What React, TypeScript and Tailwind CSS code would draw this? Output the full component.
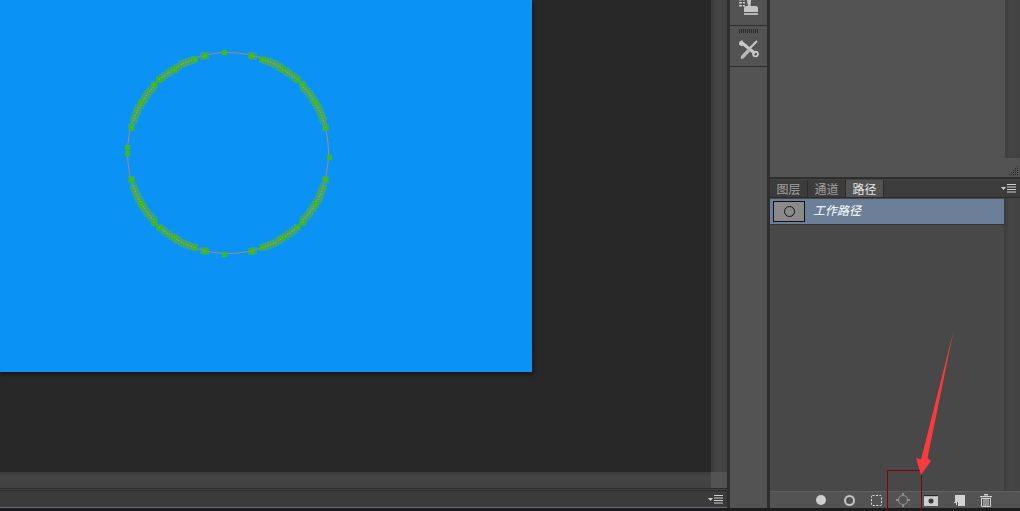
import React from 'react';

const FONT = "font-['Noto_Sans_CJK_SC','Liberation_Sans',sans-serif]";

// angles measured from the vertical axis, the stroke is mirrored in all four quadrants
const RUNS: [number, number][] = [
    [13, 15],
    [20, 42],
    [43, 44],
    [47, 72],
    [75, 76],
];

const soft: { x: number; y: number }[] = [];
const hard: { x: number; y: number }[] = [
    { x: 224, y: 52 },
    { x: 224, y: 254 },
    { x: 127, y: 153 },
    { x: 127, y: 147 },
    { x: 329, y: 157 },
];
RUNS.forEach(([from, to]) => {
    let n = 0;
    for (let a = from; a <= to; a += 1.6) {
        const rad = (a * Math.PI) / 180;
        const dx = Math.sin(rad) * 100.5;
        const dy = Math.cos(rad) * 100.5;
        [[-1, -1], [1, -1], [-1, 1], [1, 1]].forEach(([sx, sy]) => {
            const p = { x: Math.round(228 + sx * dx), y: Math.round(153 + sy * dy) };
            soft.push(p);
            if (n % 8 === 0) hard.push(p);
        });
        n += 1;
    }
});

const BrushedCircle = () => (
    <svg width="532" height="372" viewBox="0 0 532 372" className="block">
        <circle cx="228" cy="153" r="100.5" fill="none" stroke="#a98a78" strokeWidth="1" />
        <g shapeRendering="crispEdges">
            {soft.map((b, i) => (
                <rect key={i} x={b.x - 3} y={b.y - 3} width={7} height={7} fill="#45ad55" fillOpacity={0.6} />
            ))}
            {hard.map((b, i) => (
                <rect key={i} x={b.x - 2} y={b.y - 2} width={5} height={5} fill="#38bb1c" />
            ))}
            {soft.map((b, i) => (
                <rect key={i} x={b.x} y={b.y} width={1} height={1} fill="#d08a5a" />
            ))}
        </g>
    </svg>
);

const PanelMenu = () => (
    <svg width="15" height="9" viewBox="0 0 15 9" className="block">
        <path d="M0 3h5L2.500 6z" fill="#d0d0d0" />
        <path d="M6 .5h9M6 3h9M6 5.500h9M6 8h9" stroke="#cfcfcf" strokeWidth="1" />
    </svg>
);

const StampIcon = () => (
    <svg width="19" height="17" viewBox="0 0 19 17" className="block">
        <path d="M0 0h3v1.500H0zM4 0h2v1.500H4zM0 3h3v1.500H0zM4 3h2v1.500H4zM0 6h3v1.500H0zM4 6h2v1.500H4z" fill="#c8c8c8" />
        <path d="M8 0h4v2c0 2-.5 3-.5 5h5.500c1 0 2 1 2 2v4H5V9c0-1 1-2 2-2h2c0-2-1-3-1-5z" fill="#c4c4c4" />
        <path d="M5 14h14v2H5z" fill="#b4b4b4" />
    </svg>
);

const ToolsIcon = () => (
    <svg width="20" height="19" viewBox="0 0 20 19" className="block">
        <path d="M2 2 16 13.500" stroke="#c9c9c9" strokeWidth="3" />
        <circle cx="16.500" cy="14" r="2.400" fill="none" stroke="#c9c9c9" strokeWidth="1.800" />
        <path d="M0 3.500C0 1 2.500 0 4 .5L2.500 2.500l1 1.500L5.500 2.500C6 5 4 6.500 2 6 1 5.500 0 5 0 3.500z" fill="#c9c9c9" />
        <path d="M18 1 10.500 8.500" stroke="#c9c9c9" strokeWidth="2" />
        <path d="M9.500 8 12 10.500 5 18c-1 1-2.500 1-3 .5s-.5-2 .5-3z" fill="#b8b8b8" />
    </svg>
);

const FooterIcons = () => (
    <div className="flex items-center pl-[37px]">
        <div className="flex w-[28px] justify-center">
            <div className="h-[10px] w-[10px] rounded-full bg-[#cfcfcf]" />
        </div>
        <div className="flex w-[28px] justify-center">
            <div className="h-[11px] w-[11px] rounded-full border-2 border-[#c4c4c4]" />
        </div>
        <div className="flex w-[26px] justify-center">
            <svg width="11" height="11" viewBox="0 0 11 11" className="shrink-0">
                <rect x="0.500" y="0.500" width="10" height="10" rx="1" fill="none" stroke="#e0e0e0" strokeDasharray="2 1.500" />
            </svg>
        </div>
        <div className="flex w-[28px] justify-center">
            <svg width="14" height="14" viewBox="0 0 14 14" className="shrink-0">
                <circle cx="7" cy="7" r="4.500" fill="none" stroke="#8f8f8f" strokeWidth="1.200" />
                <path d="M6 0h2v2H6zM6 12h2v2H6zM0 6h2v2H0zM12 6h2v2h-2z" fill="#8f8f8f" />
            </svg>
        </div>
        <div className="flex w-[28px] justify-center">
            <svg width="14" height="11" viewBox="0 0 14 11" className="shrink-0">
                <path d="M0 0h14v11H0z" fill="#cfcfcf" />
                <path d="M0 0h14v1.200H0z" fill="#2a2a2a" />
                <circle cx="7" cy="6" r="2.500" fill="#3a3a3a" />
            </svg>
        </div>
        <div className="flex w-[28px] justify-center">
            <svg width="11" height="11" viewBox="0 0 11 11" className="shrink-0">
                <path d="M1 0h10v11H4V7H1z" fill="#d2d2d2" />
                <path d="M0 7h3v3H2V8H0z" fill="#d2d2d2" />
            </svg>
        </div>
        <div className="flex w-[26px] justify-center">
            <svg width="12" height="13" viewBox="0 0 12 13" className="shrink-0">
                <path d="M0 2h12v1.200H0zM4 0h4v1.500H4z" fill="#d0d0d0" />
                <path d="M1.500 4.500h9v8h-9z" fill="none" stroke="#d0d0d0" />
                <path d="M4 5v7M6 5v7M8 5v7" stroke="#d0d0d0" />
            </svg>
        </div>
    </div>
);

const Tab = ({ label, active }: { label: string; active?: boolean }) => (
    <div
        className={`flex h-[17px] w-[38px] items-center justify-center border-r border-[#2c2c2c] pt-[1px] text-[12px] leading-none ${
            active ? 'bg-[#535353] text-[#e6e6e6]' : 'text-[#a0a0a0]'
        }`}
    >
        {label}
    </div>
);

export default function App() {
    return (
        <div className={`relative flex h-[511px] w-[1020px] overflow-hidden bg-[#1d1d1d] ${FONT}`}>
            {/* Document area */}
            <div className="flex w-[727px] flex-col">
                <div className="flex h-[472px]">
                    <div className="flex-1 bg-[#282828]">
                        <div className="h-[372px] w-[532px] bg-[#0a92f5] shadow-[1px_2px_4px_rgba(0,0,0,0.6)]">
                            <BrushedCircle />
                        </div>
                    </div>
                    <div className="w-[16px] bg-[linear-gradient(90deg,#3a3a3a,#454545_30%,#414141)]" />
                </div>
                <div className="flex h-[16px] bg-[linear-gradient(180deg,#3a3a3a,#454545_30%,#414141)]">
                    <div className="flex-1" />
                    <div className="w-[16px] bg-[#535353]" />
                </div>
                <div className="h-[3px] border-t border-b border-[#2b2b2b] bg-[#444444]" />
                <div className="flex h-[16px] items-center justify-end bg-[#3b3b3b] pr-[4px]">
                    <PanelMenu />
                </div>
                <div className="h-[1px] bg-[#6b6b6b]" />
                <div className="flex-1 bg-[#1a1a1f]" />
            </div>

            {/* Tool strip */}
            <div className="h-[508px] w-[43px] border-x-[3px] border-[#2e2e2e] bg-[#535353]">
                <div className="flex h-[26px] items-start justify-center border-b border-[#2e2e2e]">
                    <div className="-mt-[1px]">
                        <StampIcon />
                    </div>
                </div>
                <div className="flex h-[41px] flex-col items-center border-b border-[#2e2e2e] pt-[3px]">
                    <div className="h-[4px] w-[20px] bg-[repeating-linear-gradient(90deg,#2a2a2a_0,#2a2a2a_1px,#535353_1px,#535353_2px)]" />
                    <div className="mt-[7px]">
                        <ToolsIcon />
                    </div>
                </div>
            </div>

            {/* Panels */}
            <div className="flex h-[508px] flex-1 flex-col">
                <div className="flex h-[177px] bg-[#535353]">
                    <div className="flex-1" />
                    <div className="relative w-[15px]">
                        <div className="h-[158px] bg-[linear-gradient(90deg,#3c3c3c,#454545_30%,#424242)]" />
                        <svg width="10" height="10" viewBox="0 0 10 10" className="absolute bottom-[1px] right-[1px]">
                            <path
                                d="M8 0h1v1H8zM6 2h1v1H6zM8 2h1v1H8zM4 4h1v1H4zM6 4h1v1H6zM8 4h1v1H8zM2 6h1v1H2zM4 6h1v1H4zM6 6h1v1H6zM8 6h1v1H8zM0 8h1v1H0zM2 8h1v1H2zM4 8h1v1H4zM6 8h1v1H6zM8 8h1v1H8z"
                                fill="#222222"
                            />
                        </svg>
                    </div>
                </div>
                <div className="h-[3px] border-t-2 border-[#2e2e2e] bg-[#444444]" />
                <div className="flex h-[18px] items-center justify-between border-b border-[#2c2c2c] bg-[#3c3c3c] pr-[4px]">
                    <div className="flex">
                        <Tab label="图层" />
                        <Tab label="通道" />
                        <Tab label="路径" active />
                    </div>
                    <PanelMenu />
                </div>
                <div className="flex flex-1 flex-col bg-[#484848]">
                    <div className="flex flex-1">
                        <div className="flex-1 pt-[1px]">
                            <div className="flex h-[26px] items-center border-b border-[#333333] bg-[#6c7f99] pl-[3px]">
                                <div className="flex h-[21px] w-[32px] items-center justify-center border border-[#111111] bg-[#8a8a8a]">
                                    <div className="h-[11px] w-[11px] rounded-full border border-[#111111]" />
                                </div>
                                <span className="-mt-[3px] ml-[8px] text-[12px] italic leading-none text-white">工作路径</span>
                            </div>
                        </div>
                        <div className="w-[16px] bg-[linear-gradient(90deg,#3c3c3c,#454545_30%,#424242)]" />
                    </div>
                    <div className="flex h-[17px] items-center border-t border-[#5f5f5f] bg-[#535353]">
                        <FooterIcons />
                    </div>
                </div>
            </div>

            {/* Annotation drawn over the screenshot */}
            <svg width="1020" height="511" viewBox="0 0 1020 511" className="pointer-events-none absolute left-0 top-0">
                <path d="M887.500 511V470.500H921.500V511" fill="none" stroke="#7a0505" strokeWidth="1" />
                <path d="M953.500 331 927.500 458 931 461 921 475 916 458 921 459.500z" fill="#fb3a3d" />
            </svg>
        </div>
    );
}
